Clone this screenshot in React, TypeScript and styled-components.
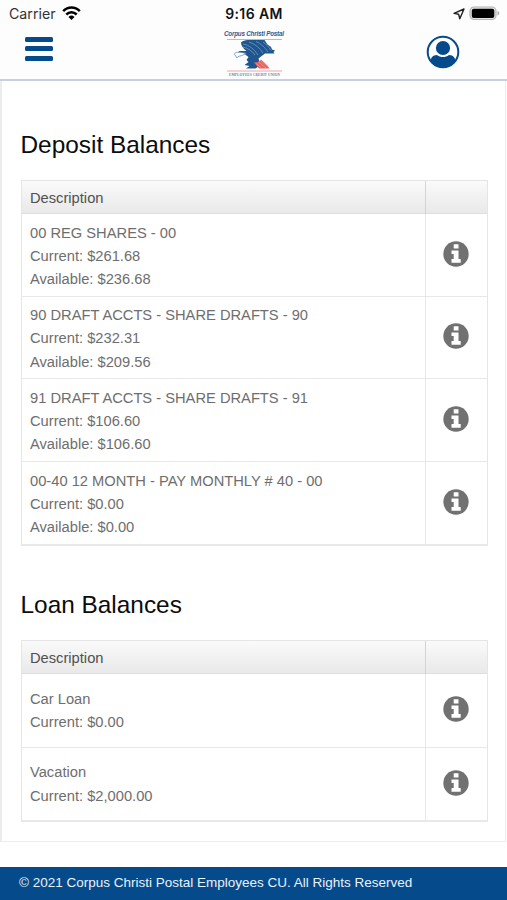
import React from "react";
import styled, { createGlobalStyle } from "styled-components";

const BLUE = "#054a8b";

const GlobalStyle = createGlobalStyle`
  * { box-sizing: border-box; }
  html, body { margin: 0; padding: 0; background: #fff; }
  body { font-family: "Liberation Sans", Arial, sans-serif; overflow: hidden; }
`;

const Page = styled.div`
  width: 507px;
  height: 900px;
  display: flex;
  flex-direction: column;
  background: #fff;
`;

const Header = styled.header`
  height: 81px;
  flex: none;
  background: #fdfdfe;
  border-bottom: 2px solid #c6d0df;
`;

const StatusBar = styled.div`
  height: 28px;
  display: grid;
  grid-template-columns: 1fr auto 1fr;
  align-items: center;
  padding: 0 7px 0 9px;
  font-family: Inter, "Liberation Sans", sans-serif;
  color: #111;
`;

const Carrier = styled.div`
  display: flex;
  align-items: center;
  gap: 6px;
  padding-bottom: 1px;
  font-size: 14.2px;
  color: #333;
`;

const Clock = styled.div`
  margin-left: -1px;
  padding-bottom: 1px;
  font-size: 14px;
  font-weight: 600;
  letter-spacing: 0.4px;
`;

const Indicators = styled.div`
  display: flex;
  justify-content: flex-end;
  align-items: center;
  gap: 4px;
  padding-bottom: 1px;
`;

const NavBar = styled.div`
  height: 51px;
  display: grid;
  grid-template-columns: 1fr 66px 1fr;
  padding: 0 47px 0 25px;
`;

const MenuButton = styled.button`
  width: 28px;
  height: 24px;
  margin-top: 8.5px;
  padding: 0;
  border: 0;
  background: none;
  display: flex;
  flex-direction: column;
  justify-content: space-between;
`;

const MenuLine = styled.span`
  display: block;
  width: 28px;
  height: 5px;
  border-radius: 1.5px;
  background: ${BLUE};
`;

const ProfileButton = styled.button`
  justify-self: end;
  width: 34px;
  height: 34px;
  margin-top: 7px;
  padding: 0;
  border: 0;
  background: none;
`;

const LogoSlot = styled.div`
  margin-left: 12px;
  width: 66px;
  height: 50px;
`;

const Icon = styled.svg`
  display: block;
  flex: none;
`;

const Panel = styled.main`
  flex: none;
  height: 761px;
  margin-right: 1px;
  padding: 0 18px 0 19px;
  border: solid #ececec;
  border-width: 0 1px 1px 2px;
`;

const Heading = styled.h2<{ $top: number }>`
  margin: 0 0 0 -0.5px;
  padding-top: ${(p) => p.$top}px;
  height: ${(p) => p.$top + 50}px;
  font-size: 24.4px;
  line-height: 30px;
  font-weight: 400;
  color: #0c0c0c;
`;

const Table = styled.div`
  width: 467px;
  border: 1px solid #e5e5e5;
  border-bottom: 2px solid #e8e8e8;
`;

const TableHead = styled.div`
  height: 33px;
  display: grid;
  grid-template-columns: 404px 1fr;
  background: linear-gradient(#fafafa, #e9e9e9);
  border-bottom: 1px solid #dedede;
`;

const HeadCell = styled.div`
  padding: 1px 8px 0;
  font-size: 14.7px;
  line-height: 33px;
  color: #505050;
  border-right: 1px solid #d4d4d4;

  &:last-child {
    border-right: 0;
  }
`;

const Row = styled.div<{ $height: number }>`
  height: ${(p) => p.$height}px;
  display: grid;
  grid-template-columns: 404px 1fr;
  border-bottom: 1px solid #e8e8e8;

  &:last-child {
    border-bottom: 0;
  }
`;

const Details = styled.div<{ $shift: number }>`
  display: flex;
  flex-direction: column;
  justify-content: center;
  padding: ${(p) => p.$shift}px 8px 0;
  font-size: 14.7px;
  line-height: 23.3px;
  white-space: nowrap;
  color: #6e6e6e;
  border-right: 1px solid #e8e8e8;
`;

const InfoCell = styled.div`
  display: flex;
  align-items: center;
  justify-content: center;
  padding: 0 1px 2px 0;
`;

const Footer = styled.footer`
  margin-top: 25px;
  height: 33px;
  padding: 0 19px;
  background: ${BLUE};
  color: #eaf2fa;
  font-size: 13.5px;
  line-height: 31px;
  white-space: nowrap;
`;

const WifiIcon = () => (
  <Icon width="19" height="15" viewBox="0 0 19 15" fill="none" stroke="#000" strokeWidth="2.5">
    <path d="M1.2 5.2C6 .3 13 .3 17.8 5.2" />
    <path d="M4.3 8.5c3-3 7.4-3 10.4 0" />
    <path d="M9.5 14 6.5 11a4.3 4.3 0 0 1 6 0z" fill="#000" stroke="none" />
  </Icon>
);

const LocationIcon = () => (
  <Icon width="12" height="12" viewBox="0 0 12 12" fill="none" stroke="#222" strokeWidth="1.4" strokeLinejoin="round">
    <path d="M1 5.4 11 1 6.8 10.8 5.6 6.2z" />
  </Icon>
);

const BatteryIcon = () => (
  <Icon width="31" height="15" viewBox="0 0 31 15">
    <rect x="1" y="1" width="26" height="12.5" rx="4" fill="#e4e4e4" stroke="#b4b4b4" strokeWidth="1.2" />
    <rect x="2.8" y="2.7" width="22.5" height="9.2" rx="2" fill="#000" />
    <path d="M28.5 4.8c2.4 1.5 2.4 3.5 0 5z" fill="#aaa" />
  </Icon>
);

const ProfileIcon = () => (
  <Icon width="34" height="34" viewBox="0 0 34 34">
    <defs>
      <clipPath id="profile-disc">
        <circle cx="17" cy="17" r="15" />
      </clipPath>
    </defs>
    <circle cx="17" cy="17" r="15.3" fill="#fff" stroke={BLUE} strokeWidth="2" />
    <circle cx="17" cy="13" r="7.1" fill={BLUE} />
    <path d="M4 29c.3-6 2.5-9 7-9 3.5 2.7 8.5 2.7 12 0 4.5 0 6.7 3 7 9l-5 5H9z" fill={BLUE} clipPath="url(#profile-disc)" />
  </Icon>
);

const InfoIcon = () => (
  <Icon width="26" height="26" viewBox="0 0 26 26">
    <circle cx="13" cy="13" r="12.7" fill="#717171" />
    <path d="M10.7 3.3h4.8v4.3h-4.8zM8.5 9.4h7v8.7h2.2v3.6H8.5v-3.6h2.2v-5.1H8.5z" fill="#fff" />
  </Icon>
);

const Logo = () => (
  <Icon width="66" height="50" viewBox="0 0 66 50">
    <text x="2" y="8.3" textLength="60" lengthAdjust="spacing" fontSize="6.3" fontWeight="700" fontStyle="italic" fill="#2e5c94">
      Corpus Christi Postal
    </text>
    <path d="M5 11.5h55M5 43h55" stroke="#f0a5a5" strokeWidth="1" />
    <path
      d="M19 14.5c2-2 5-2.5 9-2.5h14.5l3 4.5 3.5 2.5 1 2.5 3 1-1.5 1.5 1 1.500h-9.500l-4 3-2.500 2 1 3-1 5-3 2h-9.500l3.500-2.500-5-1 4-3-2-2 2-3-4-3-8-.5 3-2.500h7c-4-3-6-6-5.500-10.500z"
      fill="#1f568f"
    />
    <path
      d="M21 16c6 1 11 5 15 11M21 19c5 1 9 4 12 8M27 14c6 2 11 6 14 11M34 13.5c5 2 9 6 12 10.5M41 14c3 2 6 5 8 8.5"
      fill="none"
      stroke="#7fa3c6"
      strokeWidth=".7"
    />
    <path d="M13 27c-2-2 2-4 11-1.5l-4 2-4 1-1 1.5z" fill="#fff" stroke="#6b90b8" strokeWidth=".8" />
    <path d="M39 31.5c3 2.5 6 5 8.5 9H37l-5-6 5-.5z" fill="#e7615f" />
    <path d="M36 33.5l8 6.5M38.5 32.5l7.5 6M34 35.5l5.5 4.5" stroke="#f5a7a2" strokeWidth=".6" />
    <text x="7" y="48" textLength="51" fontSize="3.4" fontFamily="Liberation Serif, serif" fontWeight="700" fill="#62809f">
      EMPLOYEES CREDIT UNION
    </text>
  </Icon>
);

type Account = { lines: string[]; height: number };

const deposits: Account[] = [
  { lines: ["00 REG SHARES - 00", "Current: $261.68", "Available: $236.68"], height: 82.5 },
  { lines: ["90 DRAFT ACCTS - SHARE DRAFTS - 90", "Current: $232.31", "Available: $209.56"], height: 82.5 },
  { lines: ["91 DRAFT ACCTS - SHARE DRAFTS - 91", "Current: $106.60", "Available: $106.60"], height: 82.5 },
  { lines: ["00-40 12 MONTH - PAY MONTHLY # 40 - 00", "Current: $0.00", "Available: $0.00"], height: 82.5 },
];

const loans: Account[] = [
  { lines: ["Car Loan", "Current: $0.00"], height: 73.5 },
  { lines: ["Vacation", "Current: $2,000.00"], height: 72.5 },
];

const BalanceTable = ({ accounts, textShift }: { accounts: Account[]; textShift: number }) => (
  <Table>
    <TableHead>
      <HeadCell>Description</HeadCell>
      <HeadCell />
    </TableHead>
    {accounts.map((account) => (
      <Row key={account.lines[0]} $height={account.height}>
        <Details $shift={textShift}>
          {account.lines.map((line) => (
            <span key={line}>{line}</span>
          ))}
        </Details>
        <InfoCell>
          <InfoIcon />
        </InfoCell>
      </Row>
    ))}
  </Table>
);

export default function App() {
  return (
    <>
      <GlobalStyle />
      <Page>
        <Header>
          <StatusBar>
            <Carrier>
              Carrier
              <WifiIcon />
            </Carrier>
            <Clock>9:16 AM</Clock>
            <Indicators>
              <LocationIcon />
              <BatteryIcon />
            </Indicators>
          </StatusBar>
          <NavBar>
            <MenuButton aria-label="Menu">
              <MenuLine />
              <MenuLine />
              <MenuLine />
            </MenuButton>
            <LogoSlot>
              <Logo />
            </LogoSlot>
            <ProfileButton aria-label="Profile">
              <ProfileIcon />
            </ProfileButton>
          </NavBar>
        </Header>
        <Panel>
          <Heading $top={49}>Deposit Balances</Heading>
          <BalanceTable accounts={deposits} textShift={3.4} />
          <Heading $top={44}>Loan Balances</Heading>
          <BalanceTable accounts={loans} textShift={2} />
        </Panel>
        <Footer>© 2021 Corpus Christi Postal Employees CU. All Rights Reserved</Footer>
      </Page>
    </>
  );
}
